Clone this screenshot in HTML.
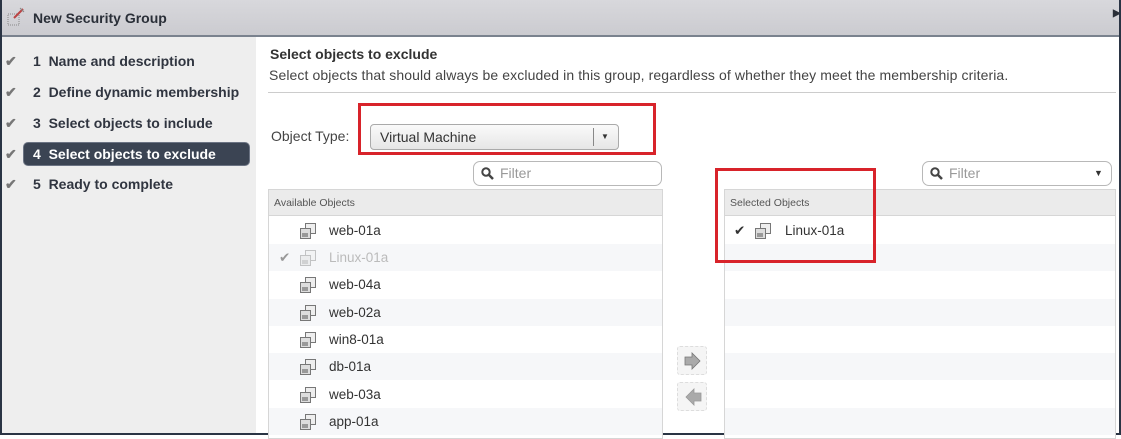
<!DOCTYPE html>
<html><head><meta charset="utf-8"><style>
*{margin:0;padding:0;box-sizing:border-box}
body{width:1121px;height:435px;overflow:hidden;background:#fff;font-family:"Liberation Sans",Arial,sans-serif;position:relative;color:#333}
.a{position:absolute}
.title{left:0;top:0;width:1121px;height:37px;background:linear-gradient(#d8d8dc,#cbcbd0);border-bottom:2px solid #7a828e}
.title span{position:absolute;left:33px;top:10px;font-size:14px;font-weight:bold;color:#2a2f38}
.side{left:0;top:37px;width:256px;height:398px;background:#eeeeee}
.step{position:absolute;left:0;font-size:14px;font-weight:bold;color:#303540;height:22px;line-height:22px}
.step .ck{position:absolute;left:5px;top:0;color:#777;font-size:14px}
.step .t{position:absolute;left:33px;white-space:nowrap}
.hl{left:23px;top:142px;width:227px;height:24px;background:#3b4453;border-radius:5px;border:1px solid #6b7383}
.tbl{border:1px solid #d6d6d6;background:#fff}
.hdr{position:absolute;left:0;right:0;top:0;height:26px;background:#ebebeb;border-bottom:1px solid #d6d6d6;font-size:10.5px;color:#555;line-height:26px;padding-left:5px}
.row{position:absolute;left:0;right:0;height:27.3px;font-size:13.5px;color:#333;line-height:27px}
.row.s{background:#f6f7f9}
.row .n{position:absolute;left:60px}
.ic{position:absolute;left:31px;top:6px;width:16px;height:16px}
.filt{border:1px solid #b8b8b8;border-radius:7px;height:25px;background:#fff;font-size:14px;color:#999;line-height:23px;padding-left:26px}
.red{border:3px solid #d8232a}
.btn{border:1px dashed #ddd;border-radius:3px;background:#f5f5f5;width:30px;height:29px}
</style></head><body>
<div class="a title"><svg class="a" style="left:6px;top:6px" width="20" height="22"><rect x="2" y="8" width="11" height="11" fill="none" stroke="#888" stroke-dasharray="1,1"/><path d="M8 12 L17 3" stroke="#b44" stroke-width="2"/><path d="M14 2 L18 6" stroke="#888"/></svg><span>New Security Group</span><span style="left:1113px;top:8px;font-size:10px">▶</span></div>
<div class="a side"></div>
<div class="a" style="left:0;top:0;width:2px;height:435px;background:#2a3444"></div>
<div class="a" style="left:1119px;top:0;width:2px;height:435px;background:#2a3444"></div>
<div class="a" style="left:0;top:433px;width:1121px;height:2px;background:#2a3444"></div>
<div class="a hl"></div>
<div class="step" style="top:50px"><span class="ck">✔</span><span class="t">1&nbsp; Name and description</span></div>
<div class="step" style="top:81px"><span class="ck">✔</span><span class="t">2&nbsp; Define dynamic membership</span></div>
<div class="step" style="top:112px"><span class="ck">✔</span><span class="t">3&nbsp; Select objects to include</span></div>
<div class="step" style="top:143px"><span class="ck">✔</span><span class="t" style="color:#fff">4&nbsp; Select objects to exclude</span></div>
<div class="step" style="top:173px"><span class="ck">✔</span><span class="t">5&nbsp; Ready to complete</span></div>

<div class="a" style="left:270px;top:46px;font-size:14px;font-weight:bold;color:#333">Select objects to exclude</div>
<div class="a" style="left:269px;top:67px;font-size:14px;color:#444;white-space:nowrap;letter-spacing:0.1px">Select objects that should always be excluded in this group, regardless of whether they meet the membership criteria.</div>
<div class="a" style="left:268px;top:92px;width:848px;height:1px;background:#ccc"></div>
<div class="a" style="left:271px;top:128px;font-size:14px;color:#444">Object Type:</div>
<div class="a red" style="left:358px;top:103px;width:298px;height:52px"></div>
<div class="a" style="left:370px;top:124px;width:249px;height:26px;border:1px solid #aaa;border-radius:4px;background:linear-gradient(#fafafa,#e6e6e6);font-size:14px;line-height:24px;padding-left:9px">Virtual Machine<span class="a" style="left:222px;top:3px;width:1px;height:18px;background:#888"></span><span class="a" style="left:230px;top:0;font-size:8px">▼</span></div>

<div class="a filt" style="left:473px;top:161px;width:189px">Filter<svg class="a" style="left:7px;top:5px" width="13" height="13"><circle cx="5" cy="5" r="3.7" fill="none" stroke="#444" stroke-width="2"/><path d="M8 8 L12 12" stroke="#444" stroke-width="2.5"/></svg></div>
<div class="a filt" style="left:922px;top:161px;width:190px">Filter<svg class="a" style="left:7px;top:5px" width="13" height="13"><circle cx="5" cy="5" r="3.7" fill="none" stroke="#444" stroke-width="2"/><path d="M8 8 L12 12" stroke="#444" stroke-width="2.5"/></svg><span class="a" style="left:171px;top:0;font-size:9px;color:#333">▼</span></div>

<svg width="0" height="0" style="position:absolute"><defs><g id="vm"><rect x="5.5" y="0.5" width="10" height="10" fill="#eee" stroke="#777"/><rect x="0.5" y="5.5" width="10" height="10" fill="#ddd" stroke="#777"/><rect x="2" y="10" width="6" height="4" fill="#999"/></g></defs></svg>

<div class="a tbl" style="left:268px;top:189px;width:395px;height:250px">
<div class="hdr">Available Objects</div>
<div class="row" style="top:27px"><svg class="ic"><use href="#vm"/></svg><span class="n">web-01a</span></div>
<div class="row s" style="top:54px;color:#bbb"><span class="a" style="left:10px;color:#999">✔</span><svg class="ic" style="opacity:.4"><use href="#vm"/></svg><span class="n">Linux-01a</span></div>
<div class="row" style="top:81px"><svg class="ic"><use href="#vm"/></svg><span class="n">web-04a</span></div>
<div class="row s" style="top:109px"><svg class="ic"><use href="#vm"/></svg><span class="n">web-02a</span></div>
<div class="row" style="top:136px"><svg class="ic"><use href="#vm"/></svg><span class="n">win8-01a</span></div>
<div class="row s" style="top:163px"><svg class="ic"><use href="#vm"/></svg><span class="n">db-01a</span></div>
<div class="row" style="top:191px"><svg class="ic"><use href="#vm"/></svg><span class="n">web-03a</span></div>
<div class="row s" style="top:218px"><svg class="ic"><use href="#vm"/></svg><span class="n">app-01a</span></div>
</div>

<div class="a tbl" style="left:724px;top:189px;width:392px;height:250px">
<div class="hdr">Selected Objects</div>
<div class="row" style="top:27px"><span class="a" style="left:9px;color:#333">✔</span><svg class="ic" style="left:30px"><use href="#vm"/></svg><span class="n">Linux-01a</span></div>
<div class="row s" style="top:54px"></div>
<div class="row s" style="top:109px"></div>
<div class="row s" style="top:163px"></div>
<div class="row s" style="top:218px"></div>
</div>
<div class="a red" style="left:715px;top:168px;width:161px;height:95px"></div>

<div class="a btn" style="left:677px;top:346px"><svg class="a" style="left:5px;top:5px" width="20" height="18"><path d="M2 5 H9 V1 L17 9 L9 17 V13 H2 Z" fill="#aaa" stroke="#777" stroke-width="0.8"/></svg></div>
<div class="a btn" style="left:677px;top:382px"><svg class="a" style="left:5px;top:5px" width="20" height="18"><path d="M18 5 H11 V1 L3 9 L11 17 V13 H18 Z" fill="#aaa" stroke="#999" stroke-width="0.8"/></svg></div>
</body></html>
